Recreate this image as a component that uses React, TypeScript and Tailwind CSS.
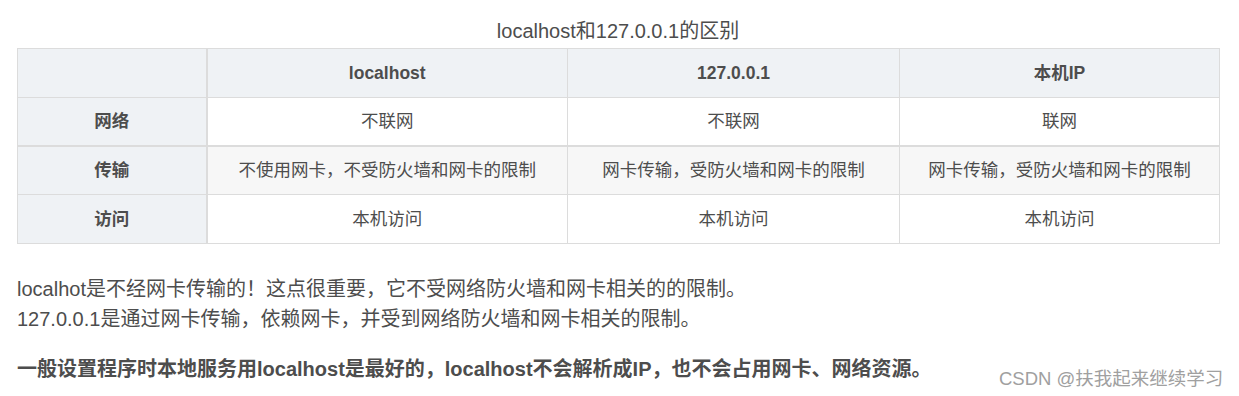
import React from "react";

const font = { fontFamily: '"Liberation Sans", Arial, "Noto Sans CJK SC", sans-serif' };

const rows = [
  { head: "网络", cells: ["不联网", "不联网", "联网"], bg: "bg-white", top: "border-t", h: "h-[48px]" },
  {
    head: "传输",
    cells: ["不使用网卡，不受防火墙和网卡的限制", "网卡传输，受防火墙和网卡的限制", "网卡传输，受防火墙和网卡的限制"],
    bg: "bg-[#f7f7f7]",
    top: "border-t-2",
    h: "h-[49px]",
  },
  { head: "访问", cells: ["本机访问", "本机访问", "本机访问"], bg: "bg-white", top: "border-t", h: "h-[49px]" },
];

export default function App() {
  return (
    <div
      className="relative w-[1239px] h-[396px] overflow-hidden bg-white text-[#4d4d4d]"
      style={font}
    >
      <div className="ml-[17px] w-[1202px]">
        <div className="pt-[16px] text-center text-[20px] leading-[30px] text-[#4d4d4d]">
          localhost和127.0.0.1的区别
        </div>
        <table className="mt-[2px] w-[1202px] table-fixed border-collapse text-[17.5px] leading-[24px]">
          <colgroup>
            <col className="w-[189px]" />
            <col className="w-[361px]" />
            <col className="w-[332px]" />
            <col className="w-[320px]" />
          </colgroup>
          <thead>
            <tr className="h-[49px] bg-[#eff2f5]">
              <th className="border border-r-2 border-[#dcdcdc]"></th>
              <th className="border border-[#dcdcdc] font-bold">localhost</th>
              <th className="border border-[#dcdcdc] font-bold">127.0.0.1</th>
              <th className="border border-[#dcdcdc] font-bold">本机IP</th>
            </tr>
          </thead>
          <tbody>
            {rows.map((r, i) => (
              <tr key={i} className={`${r.h} ${r.bg}`}>
                <th className={`border border-r-2 ${r.top} border-[#dcdcdc] bg-[#eff2f5] font-bold`}>{r.head}</th>
                {r.cells.map((c, j) => (
                  <td key={j} className={`border ${r.top} border-[#dcdcdc] text-center font-normal`}>
                    {c}
                  </td>
                ))}
              </tr>
            ))}
          </tbody>
        </table>
        <div className="mt-[30px] text-[20px] leading-[30px]">
          <p>localhot是不经网卡传输的！这点很重要，它不受网络防火墙和网卡相关的的限制。</p>
          <p>127.0.0.1是通过网卡传输，依赖网卡，并受到网络防火墙和网卡相关的限制。</p>
          <p className="mt-[20px] font-bold">
            一般设置程序时本地服务用localhost是最好的，localhost不会解析成IP，也不会占用网卡、网络资源。
          </p>
        </div>
      </div>
      <div className="absolute left-[999px] top-[367px] text-[18.5px] leading-[24px] text-[#a0a0a0] whitespace-nowrap">
        CSDN @扶我起来继续学习
      </div>
    </div>
  );
}
